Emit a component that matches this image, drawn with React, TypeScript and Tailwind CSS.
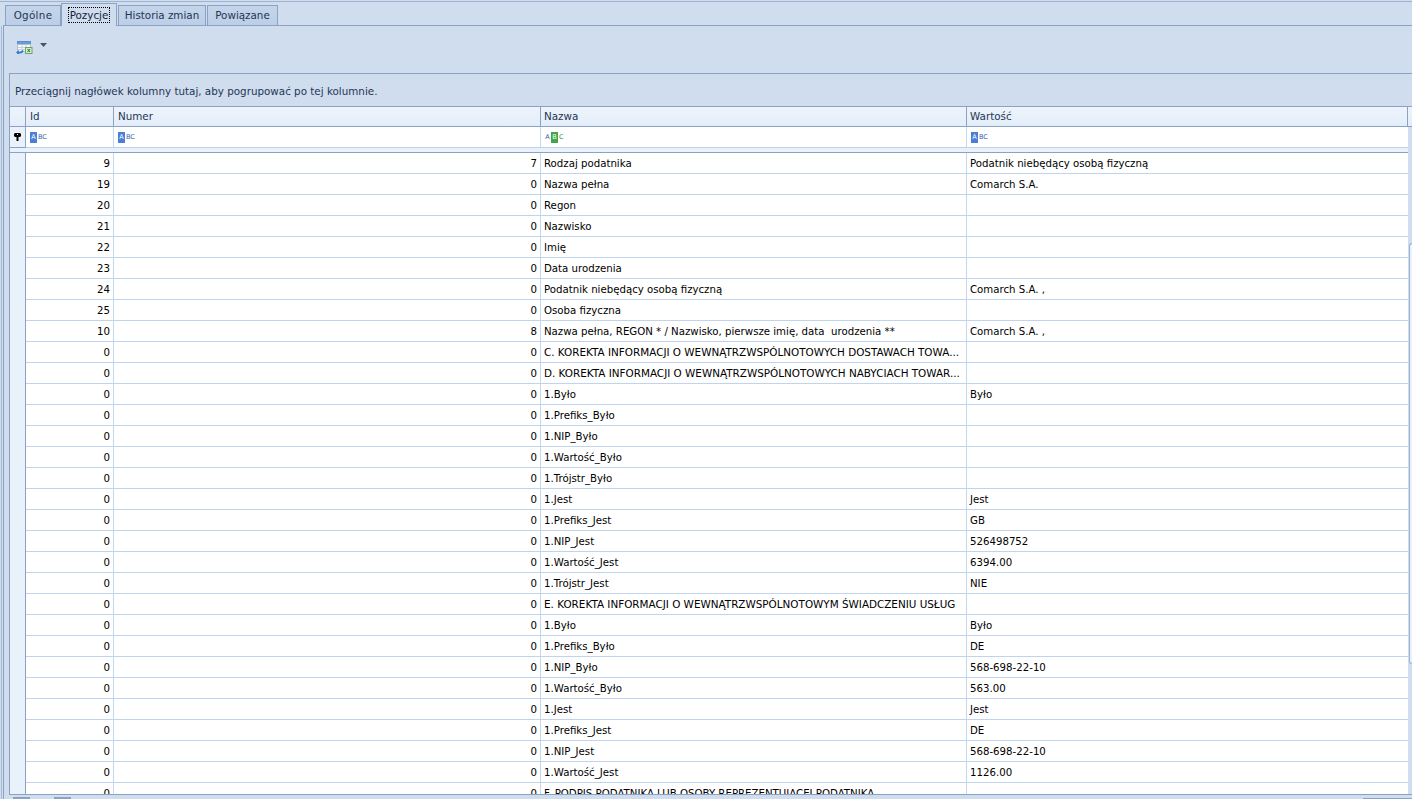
const FONT = "font-['DejaVu_Sans',sans-serif]";

type Row = [number, number, string, string];

const rows: Row[] = [
  [9, 7, "Rodzaj podatnika", "Podatnik niebędący osobą fizyczną"],
  [19, 0, "Nazwa pełna", "Comarch S.A."],
  [20, 0, "Regon", ""],
  [21, 0, "Nazwisko", ""],
  [22, 0, "Imię", ""],
  [23, 0, "Data urodzenia", ""],
  [24, 0, "Podatnik niebędący osobą fizyczną", "Comarch S.A. ,"],
  [25, 0, "Osoba fizyczna", ""],
  [10, 8, "Nazwa pełna, REGON * / Nazwisko, pierwsze imię, data  urodzenia **", "Comarch S.A. ,"],
  [0, 0, "C. KOREKTA INFORMACJI O WEWNĄTRZWSPÓLNOTOWYCH DOSTAWACH TOWA...", ""],
  [0, 0, "D. KOREKTA INFORMACJI O WEWNĄTRZWSPÓLNOTOWYCH NABYCIACH TOWAR...", ""],
  [0, 0, "1.Było", "Było"],
  [0, 0, "1.Prefiks_Było", ""],
  [0, 0, "1.NIP_Było", ""],
  [0, 0, "1.Wartość_Było", ""],
  [0, 0, "1.Trójstr_Było", ""],
  [0, 0, "1.Jest", "Jest"],
  [0, 0, "1.Prefiks_Jest", "GB"],
  [0, 0, "1.NIP_Jest", "526498752"],
  [0, 0, "1.Wartość_Jest", "6394.00"],
  [0, 0, "1.Trójstr_Jest", "NIE"],
  [0, 0, "E. KOREKTA INFORMACJI O WEWNĄTRZWSPÓLNOTOWYM ŚWIADCZENIU USŁUG", ""],
  [0, 0, "1.Było", "Było"],
  [0, 0, "1.Prefiks_Było", "DE"],
  [0, 0, "1.NIP_Było", "568-698-22-10"],
  [0, 0, "1.Wartość_Było", "563.00"],
  [0, 0, "1.Jest", "Jest"],
  [0, 0, "1.Prefiks_Jest", "DE"],
  [0, 0, "1.NIP_Jest", "568-698-22-10"],
  [0, 0, "1.Wartość_Jest", "1126.00"],
  [0, 0, "F. PODPIS PODATNIKA LUB OSOBY REPREZENTUJĄCEJ PODATNIKA", ""],
];

function AbcIcon({ green }: { green?: boolean }) {
  return (
    <span className="flex h-[11px] items-center text-[6.5px] leading-none">
      {green ? (
        <>
          <span className="w-[5px] text-center text-[#2f5fa8]">A</span>
          <span className="ml-px flex h-[11px] w-[7px] items-center justify-center bg-[#3fa548] text-white">B</span>
          <span className="ml-px text-[#2f9a3c]">C</span>
        </>
      ) : (
        <>
          <span className="flex h-[11px] w-[7px] items-center justify-center bg-[#4a7fd6] text-white">A</span>
          <span className="ml-px text-[#2f5fa8]">BC</span>
        </>
      )}
    </span>
  );
}

function Tab({ label, active, className }: { label: string; active?: boolean; className: string }) {
  if (active) {
    return (
      <div className={`relative z-10 -mb-px flex h-[23px] ${className} items-center justify-center border border-b-0 border-[#8ba2c3] bg-[#d0ddee]`}>
        <span className="border border-dotted border-black px-px leading-[14px] text-[#15233b]">{label}</span>
      </div>
    );
  }
  return (
    <div className={`flex h-[20px] ${className} items-center justify-center border border-b-0 border-[#8ba2c3] bg-gradient-to-b from-[#c4d5ea] to-[#bccfe7] text-[#1f3554]`}>
      {label}
    </div>
  );
}

const cols = "grid grid-cols-[16px_88px_427px_426px_441px]";

export default function App() {
  return (
    <div className={`${FONT} flex h-[799px] w-[1412px] flex-col overflow-hidden bg-[#d0ddee] text-[10.35px] text-black`}>
      <div className="mt-px h-px shrink-0 bg-[#9fb3d1]" />

      {/* zakladki */}
      <div className="ml-[3px] flex h-[24px] shrink-0 items-end gap-px border-b border-[#8ba2c3] pl-[2px]">
        <Tab label="Ogólne" className="w-[56px] tracking-[0.3px]" />
        <Tab label="Pozycje" active className="-ml-px w-[56px]" />
        <Tab label="Historia zmian" className="w-[88px]" />
        <Tab label="Powiązane" className="w-[71px]" />
      </div>

      <div className="ml-[1px] flex min-h-0 flex-1 border-l border-[#a9bad4] pl-[1px]">
        <div className="flex min-w-0 flex-1 flex-col border-l border-[#8ba2c3] pl-[5px]">
          {/* toolbar */}
          <div className="flex h-[47px] shrink-0 items-start gap-[7px] pt-[15px] pl-[7px]">
            <svg width="17" height="13" viewBox="0 0 17 13">
              <rect x="1.500" y="0.500" width="13" height="3" fill="#6c9bd6" stroke="#5d8fd0" />
              <rect x="1.500" y="3.500" width="13" height="7" fill="#f5f8fc" stroke="#b4c0d0" />
              <path d="M2 6.500h12M2 8.500h12M6 4v6M10 4v6" stroke="#c6cfdb" />
              <path d="M7 9.500c-1 2-3 2.500-4.500 2" fill="none" stroke="#2f7cc8" strokeWidth="1.700" />
              <path d="M0 11.500l3-2.500v5z" fill="#2f7cc8" />
              <rect x="9.500" y="6.500" width="6.500" height="6" fill="#dcebd8" stroke="#6aa65c" />
              <path d="M11.500 8l2.500 3M14 8l-2.500 3" stroke="#2f8a38" strokeWidth="1.100" />
            </svg>
            <svg width="7" height="4" viewBox="0 0 7 4" className="mt-[2px]">
              <path d="M0 0h7L3.500 4z" fill="#44546a" />
            </svg>
          </div>

          {/* grid */}
          <div className="flex min-h-0 flex-1 flex-col border-y border-l border-[#8ba2c3]">
            <div className="flex h-[32px] shrink-0 items-end pb-[6px] pl-[5px] text-[#1f3554]">
              Przeciągnij nagłówek kolumny tutaj, aby pogrupować po tej kolumnie.
            </div>

            <div className="h-[21px] shrink-0 border-y border-[#8ba2c3] bg-gradient-to-b from-[#eef4fc] to-[#e3edf9] text-[#1f3554]">
              <div className={cols}>
                <div className="h-[19px] border-r border-[#8ba2c3]" />
                <div className="border-r border-[#8ba2c3] pl-[4px] leading-[18px]">Id</div>
                <div className="border-r border-[#8ba2c3] pl-[4px] leading-[18px]">Numer</div>
                <div className="border-r border-[#8ba2c3] pl-[3px] leading-[18px]">Nazwa</div>
                <div className="border-r border-[#8ba2c3] pl-[3px] leading-[18px]">Wartość</div>
              </div>
            </div>

            <div className={`${cols} mr-[4px] h-[21px] shrink-0 border-b border-[#bcd2ec] bg-white`}>
              <div className="-mb-px flex items-center justify-center border-r border-b border-[#8ba2c3] bg-[#e9f1fb]">
                <svg width="7" height="8" viewBox="0 0 7 8">
                  <path d="M1 0h5l1 1v2l-1 1H4.500v4h-2V4H1L0 3V1z" fill="#000" />
                  <rect x="3" y="1" width="1" height="1" fill="#e9f1fb" />
                </svg>
              </div>
              <div className="flex items-center border-r border-[#c5d8f1] pl-[4px]"><AbcIcon /></div>
              <div className="flex items-center border-r border-[#c5d8f1] pl-[4px]"><AbcIcon /></div>
              <div className="flex items-center border-r border-[#c5d8f1] pl-[4px]"><AbcIcon green /></div>
              <div className="flex items-center pl-[4px]"><AbcIcon /></div>
            </div>

            <div className="mr-[4px] h-[5px] shrink-0 border-b border-[#8ba2c3] bg-[#e9f1fb]" />

            <div className="relative min-h-0 flex-1 overflow-hidden text-[10.2px]">
              {rows.map((r, i) => (
                <div key={i} className={`${cols} mr-[4px] h-[21px] border-b border-[#bfd4ef] bg-white`}>
                  <div className="-mb-px border-r border-b border-[#8ba2c3] bg-[#e9f1fb]" />
                  <div className="border-r border-[#c5d8f1] pr-[3px] text-right leading-[21px]">{r[0]}</div>
                  <div className="border-r border-[#c5d8f1] pr-[3px] text-right leading-[21px]">{r[1]}</div>
                  <div className={`overflow-hidden border-r border-[#c5d8f1] pl-[3px] leading-[21px] whitespace-pre ${/^[CDE]\. /.test(r[2]) ? "text-[10.4px]" : ""}`}>{r[2]}</div>
                  <div className="pl-[3px] leading-[21px]">{r[3]}</div>
                </div>
              ))}
              {/* pasek przewijania */}
              <div className="absolute inset-y-0 right-0 w-[4px]">
                <div className="mt-[90px] ml-[1px] h-[421px] rounded-l-sm border border-r-0 border-[#9fb3d1] bg-[#e9f1fb]" />
              </div>
            </div>
          </div>

          <div className="flex h-[4px] shrink-0 gap-[24px] pt-[2px] pl-[4px]">
            <div className="h-[2px] w-[17px] bg-[#8ba2c3]" />
            <div className="h-[2px] w-[17px] bg-[#8ba2c3]" />
            <div className="mt-[1px] ml-auto h-px w-[49px] bg-[#8ba2c3]" />
          </div>
        </div>
      </div>
    </div>
  );
}
